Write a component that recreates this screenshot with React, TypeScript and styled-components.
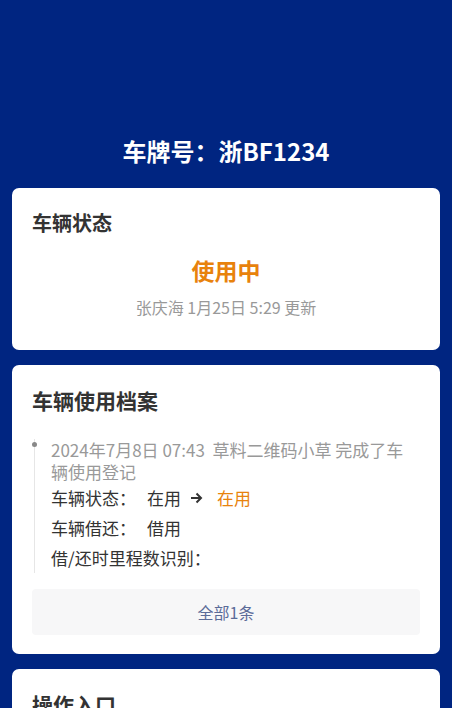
import React from "react"
import styled, { createGlobalStyle } from "styled-components"

const GlobalStyle = createGlobalStyle`
  html, body {
    margin: 0;
    padding: 0;
    background: #002581;
    font-family: "Noto Sans CJK SC", "Noto Sans", sans-serif;
  }
`

const Page = styled.div`
  min-height: 100vh;
  background: #002581;
  padding: 0 12px 20px;
  box-sizing: border-box;
`

const Header = styled.h1`
  margin: 0;
  padding-top: 134px;
  height: 54px;
  text-align: center;
  color: #fff;
  font-size: 24px;
  line-height: 34px;
  font-weight: 700;
`

const Card = styled.section<{ $bottom?: number }>`
  background: #fff;
  border-radius: 7px;
  padding: 20px 20px ${(p) => p.$bottom ?? 20}px;
  margin-bottom: 15px;
`

const CardTitle = styled.h2<{ $size?: number }>`
  margin: 0;
  color: #333;
  font-size: ${(p) => p.$size ?? 21}px;
  line-height: 30px;
  font-weight: 700;
`

const StatusBlock = styled.div`
  display: flex;
  flex-direction: column;
  align-items: center;
  padding-top: 16px;
`

const StatusText = styled.div`
  color: #e8820c;
  font-size: 23px;
  line-height: 32px;
  font-weight: 700;
`

const UpdateText = styled.div`
  margin-top: 9px;
  color: #999;
  font-size: 16px;
  line-height: 24px;
`

const Timeline = styled.div`
  margin-top: 24px;
  margin-left: 2px;
  position: relative;
  border-left: 1px solid #e6e6e6;
  padding-left: 16px;
  padding-right: 14px;
`

const Dot = styled.span`
  position: absolute;
  left: -3px;
  top: 3px;
  width: 5px;
  height: 5px;
  border-radius: 50%;
  background: #888;
`

const EntryHead = styled.div`
  color: #999;
  font-size: 17px;
  line-height: 22px;
  word-break: break-all;
`

const Row = styled.div`
  display: flex;
  align-items: center;
  color: #333;
  font-size: 17px;
  line-height: 30px;
`

const Value = styled.span`
  margin-left: 11px;
`

const Arrow = styled.svg`
  margin-left: 9px;
  width: 13px;
  height: 12px;
`

const Highlight = styled.span`
  margin-left: 14px;
  color: #e8820c;
`

const MoreButton = styled.button`
  display: block;
  width: 100%;
  margin-top: 16px;
  height: 46px;
  border: none;
  border-radius: 4px;
  background: #f7f7f8;
  color: #5b6b98;
  font-family: inherit;
  font-size: 16px;
`

export default function App() {
  return (
    <>
      <GlobalStyle />
      <Page>
        <Header>车牌号：浙BF1234</Header>
        <Card $bottom={31}>
          <CardTitle $size={20}>车辆状态</CardTitle>
          <StatusBlock>
            <StatusText>使用中</StatusText>
            <UpdateText>张庆海 1月25日 5:29 更新</UpdateText>
          </StatusBlock>
        </Card>
        <Card $bottom={19}>
          <CardTitle>车辆使用档案</CardTitle>
          <Timeline>
            <Dot />
            <EntryHead>2024年7月8日 07:43&nbsp; 草料二维码小草 完成了车辆使用登记</EntryHead>
            <Row>
              <span>车辆状态：</span>
              <Value>在用</Value>
              <Arrow viewBox="0 0 13 12">
                <path
                  d="M1 6h10M6.5 1.5L11 6l-4.5 4.5"
                  fill="none"
                  stroke="#333"
                  strokeWidth="2"
                />
              </Arrow>
              <Highlight>在用</Highlight>
            </Row>
            <Row>
              <span>车辆借还：</span>
              <Value>借用</Value>
            </Row>
            <Row>
              <span>借/还时里程数识别：</span>
            </Row>
          </Timeline>
          <MoreButton>全部1条</MoreButton>
        </Card>
        <Card>
          <CardTitle>操作入口</CardTitle>
        </Card>
      </Page>
    </>
  )
}
